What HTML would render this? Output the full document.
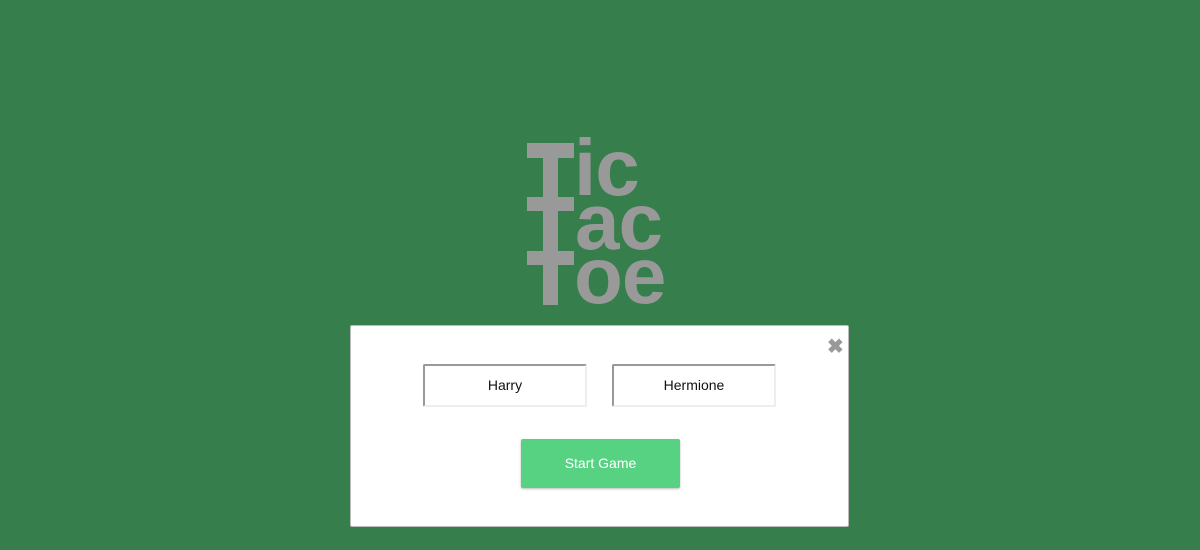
<!DOCTYPE html><html><head><style>
body{margin:0;width:1200px;height:550px;background:#367e4b;position:relative;overflow:hidden;font-family:"Liberation Sans",sans-serif}
.g{position:absolute;background:#999}
.t{position:absolute;color:#999;font-weight:bold;font-size:80px;line-height:1;letter-spacing:-1px}
.modal{position:absolute;left:350px;top:325px;width:497px;height:200px;background:#fff;border:1px solid #bbb;border-radius:2px}
.in{position:absolute;top:38px;width:160px;height:39px;border:2px solid #999;border-right-color:#eee;border-bottom-color:#eee;border-radius:2px;font-size:14px;text-align:center;line-height:39px;color:#111}
.btn{position:absolute;left:170px;top:113px;width:159px;height:49px;background:#57d283;border-radius:2px;color:#fff;font-size:14px;text-align:center;line-height:48px;box-shadow:0 1px 2px #bbb}
.x{position:absolute;left:476px;top:8px;color:#999;font-size:20px;font-weight:bold}
</style></head><body>
<div class="t" style="left:574px;top:128px">ic</div>
<div class="t" style="left:575px;top:182px">ac</div>
<div class="t" style="left:574px;top:236px">oe</div>
<div class="g" style="left:543px;top:143px;width:15px;height:162px"></div>
<div class="g" style="left:527px;top:143px;width:47px;height:15px"></div>
<div class="g" style="left:527px;top:197px;width:47px;height:14px"></div>
<div class="g" style="left:527px;top:251px;width:47px;height:14px"></div>
<div class="modal">
<div class="x">✖</div>
<div class="in" style="left:72px">Harry</div>
<div class="in" style="left:261px">Hermione</div>
<div class="btn">Start Game</div>
</div>
</body></html>
